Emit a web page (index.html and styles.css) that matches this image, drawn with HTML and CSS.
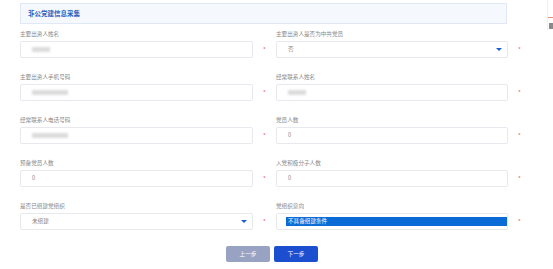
FILE: index.html
```html
<!DOCTYPE html>
<html lang="zh-CN">
<head>
    <meta charset="UTF-8">
    <title>非公党建信息采集</title>
    <link rel="stylesheet" href="styles.css">
</head>
<body>
    <div class="page">
        <div class="panel-title">非公党建信息采集</div>

        <form class="form-grid">
            <div class="field">
                <label>主要出资人姓名</label>
                <div class="row">
                    <div class="input"><span class="masked w18"></span></div>
                    <span class="req">*</span>
                </div>
            </div>
            <div class="field">
                <label>主要出资人是否为中共党员</label>
                <div class="row">
                    <div class="input select">否<i class="caret"></i></div>
                    <span class="req">*</span>
                </div>
            </div>

            <div class="field">
                <label>主要出资人手机号码</label>
                <div class="row">
                    <div class="input"><span class="masked w36"></span></div>
                    <span class="req">*</span>
                </div>
            </div>
            <div class="field">
                <label>经常联系人姓名</label>
                <div class="row">
                    <div class="input"><span class="masked w18"></span></div>
                    <span class="req">*</span>
                </div>
            </div>

            <div class="field">
                <label>经常联系人电话号码</label>
                <div class="row">
                    <div class="input"><span class="masked w36"></span></div>
                    <span class="req">*</span>
                </div>
            </div>
            <div class="field">
                <label>党员人数</label>
                <div class="row">
                    <div class="input">0</div>
                    <span class="req">*</span>
                </div>
            </div>

            <div class="field">
                <label>预备党员人数</label>
                <div class="row">
                    <div class="input">0</div>
                    <span class="req">*</span>
                </div>
            </div>
            <div class="field">
                <label>入党积极分子人数</label>
                <div class="row">
                    <div class="input">0</div>
                    <span class="req">*</span>
                </div>
            </div>

            <div class="field">
                <label>是否已组建党组织</label>
                <div class="row">
                    <div class="input select">未组建<i class="caret"></i></div>
                    <span class="req">*</span>
                </div>
            </div>
            <div class="field">
                <label>党组织意向</label>
                <div class="row">
                    <div class="input listbox"><span class="option-selected">不具备组建条件</span></div>
                    <span class="req">*</span>
                </div>
            </div>
        </form>

        <div class="actions">
            <button type="button" class="btn btn-prev">上一步</button>
            <button type="button" class="btn btn-next">下一步</button>
        </div>
    </div>

    <!-- sliver of the neighbouring window on the right edge -->
    <div class="edge-peek">
        <span class="peek-line"></span>
        <span class="peek-box"></span>
    </div>
</body>
</html>
```

FILE: styles.css
```css
body {
    margin: 0;
    background: #fff;
    font-family: "Noto Sans CJK SC", "Noto Sans", sans-serif;
    color: #666;
    position: relative;
    height: 269px;
    overflow: hidden;
}
.page {
    padding: 3px 0 0 20px;
}
.panel-title {
    width: 478px;
    height: 19px;
    line-height: 19px;
    padding-left: 7px;
    background: #f5f8fd;
    border: 1px solid #dfe8f4;
    color: #2a5fc0;
    font-size: 6.5px;
    font-weight: bold;
}
.form-grid {
    display: grid;
    grid-template-columns: 256px 256px;
    row-gap: 15px;
    margin-top: 6px;
}
.field label {
    display: block;
    height: 8px;
    line-height: 8px;
    font-size: 5.6px;
    color: #888;
    margin: 0 0 3px;
}
.row {
    display: flex;
    align-items: center;
}
.input {
    position: relative;
    box-sizing: border-box;
    width: 233px;
    height: 17px;
    line-height: 15px;
    padding-left: 11px;
    border: 1px solid #e7e9ee;
    border-radius: 2px;
    font-size: 5.6px;
    color: #888;
}
.field:nth-child(even) .input {
    width: 232px;
}
.req {
    width: 23px;
    text-align: center;
    color: #e8655f;
    font-size: 6px;
    line-height: 6px;
}
.masked {
    display: inline-block;
    vertical-align: middle;
    height: 5px;
    background: #dcdcdc;
    filter: blur(0.8px);
}
.w18 { width: 18px; }
.w36 { width: 36px; }
.caret {
    position: absolute;
    right: 5px;
    top: 6px;
    width: 0;
    height: 0;
    border-left: 3px solid transparent;
    border-right: 3px solid transparent;
    border-top: 3px solid #1d5fd0;
}
.listbox {
    padding: 3px 0 0 9px;
    line-height: 9px;
}
.option-selected {
    display: block;
    height: 9px;
    padding-left: 2px;
    background: #0b6bd6;
    color: #fff;
}
.actions {
    display: flex;
    gap: 4px;
    margin: 16px 0 0 206px;
}
.btn {
    width: 44px;
    height: 16px;
    padding: 0;
    border: none;
    border-radius: 2px;
    color: #fff;
    font-family: inherit;
    font-size: 5.6px;
    cursor: pointer;
}
.btn-prev {
    background: #98a3c3;
}
.btn-next {
    background: #1c4fcf;
}
.edge-peek {
    position: absolute;
    top: 0;
    right: 0;
    width: 5px;
    height: 30px;
    border-left: 1px solid #f0f0f0;
}
.peek-line {
    position: absolute;
    top: 17px;
    left: 0;
    width: 5px;
    height: 1px;
    background: #e98a7c;
}
.peek-box {
    position: absolute;
    top: 23px;
    left: 1px;
    width: 4px;
    height: 6px;
    background: #8a8a8a;
}
```
